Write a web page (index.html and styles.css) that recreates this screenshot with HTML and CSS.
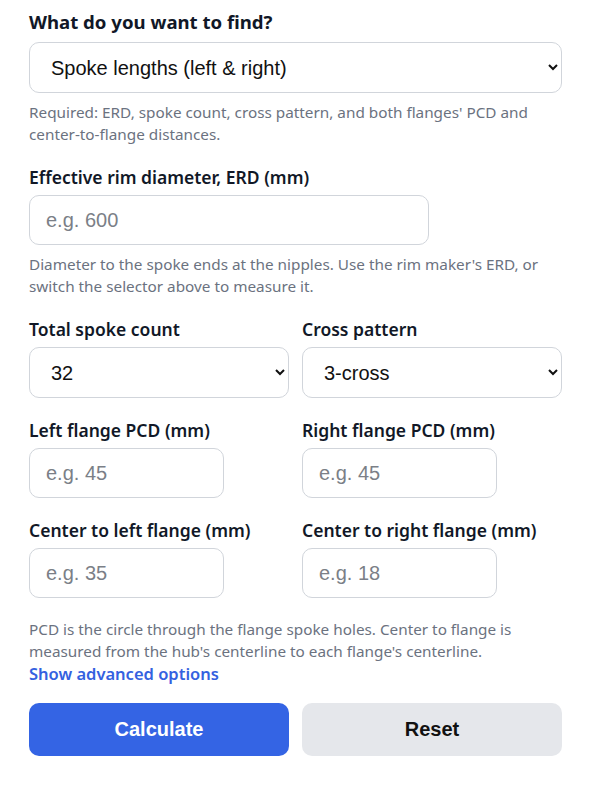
FILE: index.html
```html
<!DOCTYPE html>
<html lang="en">
<head>
    <meta charset="UTF-8">
    <meta name="viewport" content="width=device-width, initial-scale=1.0">
    <title>Spoke Length Calculator</title>
    <link rel="stylesheet" href="styles.css">
</head>
<body>
<form class="calc" id="spokeForm">
    <div class="field">
        <label for="mode" class="title">What do you want to find?</label>
        <select id="mode" class="wide">
            <option>Spoke lengths (left &amp; right)</option>
            <option>Measure ERD</option>
        </select>
        <p class="hint">Required: ERD, spoke count, cross pattern, and both flanges' PCD and center-to-flange distances.</p>
    </div>

    <div class="field">
        <label for="erd">Effective rim diameter, ERD (mm)</label>
        <input type="text" id="erd" class="medium" placeholder="e.g. 600">
        <p class="hint">Diameter to the spoke ends at the nipples. Use the rim maker's ERD, or switch the selector above to measure it.</p>
    </div>

    <div class="row">
        <div class="field">
            <label for="count">Total spoke count</label>
            <select id="count">
                <option>32</option>
                <option>28</option>
                <option>36</option>
            </select>
        </div>
        <div class="field">
            <label for="cross">Cross pattern</label>
            <select id="cross">
                <option>3-cross</option>
                <option>2-cross</option>
                <option>Radial</option>
            </select>
        </div>
    </div>

    <div class="row">
        <div class="field">
            <label for="pcdLeft">Left flange PCD (mm)</label>
            <input type="text" id="pcdLeft" class="short" placeholder="e.g. 45">
        </div>
        <div class="field">
            <label for="pcdRight">Right flange PCD (mm)</label>
            <input type="text" id="pcdRight" class="short" placeholder="e.g. 45">
        </div>
    </div>

    <div class="row">
        <div class="field">
            <label for="ctfLeft">Center to left flange (mm)</label>
            <input type="text" id="ctfLeft" class="short" placeholder="e.g. 35">
        </div>
        <div class="field">
            <label for="ctfRight">Center to right flange (mm)</label>
            <input type="text" id="ctfRight" class="short" placeholder="e.g. 18">
        </div>
    </div>

    <p class="hint note">PCD is the circle through the flange spoke holes. Center to flange is measured from the hub's centerline to each flange's centerline.</p>
    <a href="#" class="advanced">Show advanced options</a>

    <div class="actions">
        <button type="submit" class="btn primary">Calculate</button>
        <button type="reset" class="btn secondary">Reset</button>
    </div>
</form>
</body>
</html>
```

FILE: styles.css
```css
body {
    margin: 0;
    background: #fff;
    color: #111827;
    font-family: 'Noto Sans', sans-serif;
}
.calc {
    width: 533px;
    padding: 10px 29px 20px;
}
.field {
    margin-bottom: 20px;
}
label {
    display: block;
    font-size: 17.5px;
    font-weight: 600;
    line-height: 24px;
    margin-bottom: 6px;
}
label.title {
    font-size: 18.6px;
    font-weight: 700;
    margin-bottom: 8px;
}
select, input[type="text"] {
    display: block;
    box-sizing: border-box;
    height: 51px;
    padding: 0 16px;
    font-family: 'Liberation Sans', Arial, sans-serif;
    font-size: 20px;
    color: #111;
    background: #fff;
    border: 1px solid #d1d5db;
    border-radius: 10px;
}
input[type="text"] {
    height: 50px;
}
input::placeholder {
    color: #7b7f87;
}
select {
    width: 100%;
    padding-left: 17px;
}
.medium {
    width: 400px;
}
.short {
    width: 195px;
}
.hint {
    margin: 8px 0 0;
    font-size: 15.3px;
    line-height: 22px;
    color: #6b7280;
}
/* two columns for paired inputs */
.row {
    display: grid;
    grid-template-columns: 1fr 1fr;
    gap: 13px;
}
.note {
    margin-top: 0;
}
.advanced {
    display: block;
    font-size: 16.5px;
    font-weight: 600;
    line-height: 24px;
    color: #3461e0;
    text-decoration: none;
}
.advanced:hover {
    text-decoration: underline;
}
.actions {
    display: grid;
    grid-template-columns: 1fr 1fr;
    gap: 13px;
    margin-top: 17px;
}
.btn {
    height: 53px;
    border: none;
    border-radius: 10px;
    font-family: 'Liberation Sans', Arial, sans-serif;
    font-size: 20px;
    font-weight: bold;
    cursor: pointer;
}
.primary {
    background: #3464e4;
    color: #fff;
}
.secondary {
    background: #e5e7eb;
    color: #111;
}
```
